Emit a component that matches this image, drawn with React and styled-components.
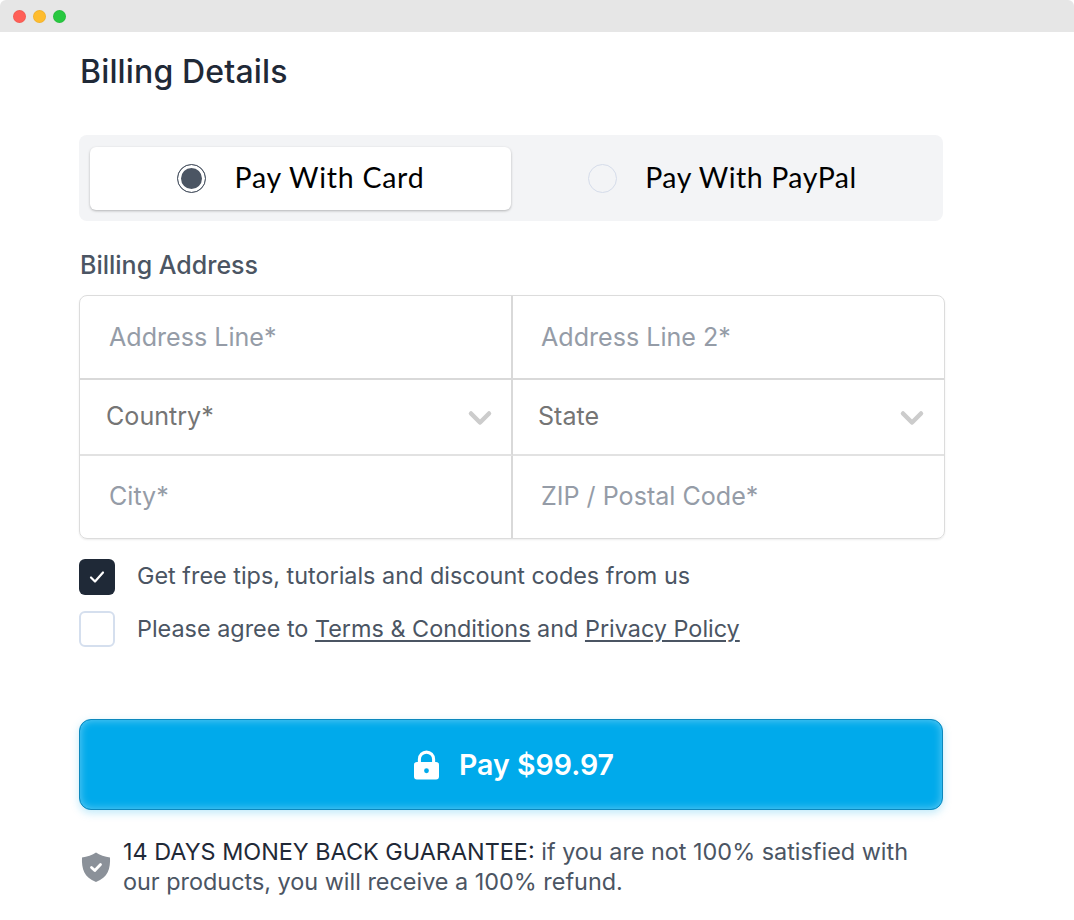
import React from "react";
import styled, { createGlobalStyle } from "styled-components";
import { ChevronDown } from "lucide-react";

const Global = createGlobalStyle`
  * { box-sizing: border-box; }
  html, body { margin: 0; padding: 0; background: #fff; }
  body { font-family: Inter, "Liberation Sans", sans-serif; }
`;

const Page = styled.div`
  width: 1074px;
  height: 920px;
  overflow: hidden;
  background: #fff;
`;

const TitleBar = styled.div`
  height: 32px;
  background: #e6e6e6;
  display: flex;
  align-items: center;
  gap: 7px;
  padding-left: 13px;
  border-radius: 6px 6px 0 0;
`;

const Dot = styled.span`
  width: 13px;
  height: 13px;
  border-radius: 50%;
  background: ${(p) => p.$color};
  border: 1px solid rgba(0, 0, 0, 0.05);
`;

const Content = styled.main`
  width: 866px;
  margin-left: 79px;
`;

const Title = styled.h1`
  margin: 0 0 0 1px;
  padding-top: 18px;
  font-size: 32px;
  letter-spacing: 0.15px;
  line-height: 44px;
  font-weight: 500;
  color: #1f2937;
`;

const Tabs = styled.div`
  margin: 41px 0 0;
  width: 864px;
  height: 86px;
  padding: 12px 11px;
  display: grid;
  grid-template-columns: 421px 1fr;
  background: #f3f4f6;
  border-radius: 8px;
`;

const Tab = styled.div`
  height: 63px;
  padding: 0 0 4px ${(p) => (p.$active ? "0" : "2px")};
  display: flex;
  align-items: center;
  justify-content: center;
  gap: ${(p) => (p.$active ? "29px" : "28px")};
  border-radius: 6px;
  font-family: Lato, sans-serif;
  font-size: 28.5px;
  letter-spacing: ${(p) => (p.$active ? "0.75px" : "0.55px")};
  color: #000;
  ${(p) =>
    p.$active &&
    `background: #fff;
     box-shadow: 0 1px 3px rgba(0,0,0,.2), 0 1px 2px rgba(0,0,0,.08);`}
`;

const Radio = styled.span`
  width: 29px;
  height: 29px;
  margin-top: 4px;
  border-radius: 50%;
  border: 1px solid ${(p) => (p.$on ? "#4b5563" : "#d5dcea")};
  background: ${(p) => (p.$on ? "#4b5563" : "transparent")};
  box-shadow: ${(p) => (p.$on ? "inset 0 0 0 3px #fff" : "none")};
`;

const SectionLabel = styled.div`
  margin: 27px 0 0 1px;
  font-size: 25px;
  line-height: 34px;
  font-weight: 500;
  color: #4b5563;
`;

const FormGrid = styled.div`
  margin-top: 13px;
  width: 866px;
  height: 244px;
  display: grid;
  grid-template-columns: 433px 1fr;
  grid-template-rows: 84px 76px 84px;
  border: 1px solid #dcdcdc;
  border-radius: 8px;
  box-shadow: 0 1px 2px rgba(0, 0, 0, 0.08);
  overflow: hidden;
`;

const Cell = styled.div`
  position: relative;
  min-width: 0;
  border-right: ${(p) => (p.$left ? "2px solid #d9d9d9" : "none")};
  border-bottom: ${(p) => (p.$last ? "none" : p.$top ? "2px solid #d9d9d9" : "2px solid #e2e2e2")};
`;

const Input = styled.input`
  width: 100%;
  height: 100%;
  border: 0;
  outline: 0;
  background: transparent;
  padding: 0 ${(p) => (p.$right ? "28px" : "29px")} ${(p) => (p.$low ? "4px" : "0")};
  font-family: Inter, sans-serif;
  font-size: 25.1px;
  color: #374151;
  &::placeholder {
    color: #959ca7;
    opacity: 1;
  }
`;

const Select = styled.select`
  width: 100%;
  height: 100%;
  border: 0;
  outline: 0;
  appearance: none;
  background: transparent;
  padding: 0 ${(p) => (p.$right ? "25px" : "26px")} 2px;
  font-family: Inter, sans-serif;
  font-size: 25.1px;
  color: #757575;
`;

const Chevron = styled(ChevronDown)`
  position: absolute;
  right: ${(p) => (p.$right ? "14px" : "13px")};
  top: 50%;
  margin-top: -17px;
  color: #cccccc;
  pointer-events: none;
`;

const Checks = styled.div`
  margin: 20px 0 0;
  display: flex;
  flex-direction: column;
  gap: 16px;
`;

const CheckRow = styled.label`
  display: flex;
  align-items: center;
  gap: 22px;
  font-size: 23.4px;
  line-height: 36px;
  color: #4b5563;
`;

const CheckText = styled.span`
  line-height: ${(p) => (p.$raise ? "34px" : "36px")};
  margin-bottom: ${(p) => (p.$raise ? "2px" : "0")};
`;

const Box = styled.span`
  width: 36px;
  height: 36px;
  flex: none;
  display: flex;
  align-items: center;
  justify-content: center;
  border-radius: 6px;
  background: ${(p) => (p.$checked ? "#1f2937" : "#fff")};
  border: ${(p) => (p.$checked ? "none" : "2px solid #d5dfee")};
`;

const Link = styled.a`
  color: #4b5563;
  text-decoration: underline;
  text-underline-offset: 3px;
`;

const PayButton = styled.button`
  margin: 72px 0 0;
  width: 864px;
  height: 91px;
  padding: 0 0 0 6px;
  display: flex;
  align-items: center;
  justify-content: center;
  gap: 20px;
  border: 1px solid #0d88bd;
  border-radius: 12px;
  background: #00aaeb;
  box-shadow: inset 0 0 9px rgba(255, 255, 255, 0.4), 0 3px 8px rgba(0, 170, 235, 0.25);
  color: #fff;
  font-family: Inter, sans-serif;
  font-size: 28.5px;
  font-weight: 600;
`;

const Guarantee = styled.div`
  margin: 27px 0 0 1px;
  width: 850px;
  display: flex;
  align-items: center;
  gap: 11px;
`;

const GuaranteeText = styled.p`
  margin: 0;
  font-size: 23.4px;
  line-height: 30px;
  color: #4b5563;
`;

const Strong = styled.span`
  color: #1f2937;
`;

export default function App() {
  return (
    <Page>
      <Global />
      <TitleBar>
        <Dot $color="#ff5f57" />
        <Dot $color="#febc2e" />
        <Dot $color="#28c840" />
      </TitleBar>
      <Content>
        <Title>Billing Details</Title>
        <Tabs>
          <Tab $active>
            <Radio $on />
            Pay With Card
          </Tab>
          <Tab>
            <Radio />
            Pay With PayPal
          </Tab>
        </Tabs>
        <SectionLabel>Billing Address</SectionLabel>
        <FormGrid>
          <Cell $left $top>
            <Input placeholder="Address Line*" />
          </Cell>
          <Cell $top>
            <Input $right placeholder="Address Line 2*" />
          </Cell>
          <Cell $left>
            <Select defaultValue="">
              <option value="">Country*</option>
            </Select>
            <Chevron size={36} strokeWidth={3} />
          </Cell>
          <Cell>
            <Select $right defaultValue="">
              <option value="">State</option>
            </Select>
            <Chevron $right size={36} strokeWidth={3} />
          </Cell>
          <Cell $left $last>
            <Input $low placeholder="City*" />
          </Cell>
          <Cell $last>
            <Input $low $right placeholder="ZIP / Postal Code*" />
          </Cell>
        </FormGrid>
        <Checks>
          <CheckRow>
            <Box $checked>
              <svg width="16" height="14" viewBox="0 0 16 14" fill="none">
                <path d="M2 7.5 6 11.5 14 2.5" stroke="#fff" strokeWidth="2.2" strokeLinecap="round" strokeLinejoin="round" />
              </svg>
            </Box>
            <CheckText $raise>Get free tips, tutorials and discount codes from us</CheckText>
          </CheckRow>
          <CheckRow>
            <Box />
            <CheckText>
              Please agree to <Link>Terms &amp; Conditions</Link> and <Link>Privacy Policy</Link>
            </CheckText>
          </CheckRow>
        </Checks>
        <PayButton>
          <svg width="25" height="30" viewBox="0 0 26 30">
            <path
              fill="#fff"
              fillRule="evenodd"
              d="M13 0a9 9 0 0 1 9 9v3h1a3 3 0 0 1 3 3v12a3 3 0 0 1-3 3H3a3 3 0 0 1-3-3V15a3 3 0 0 1 3-3h1V9a9 9 0 0 1 9-9Zm0 3.2A5.8 5.8 0 0 0 7.2 9v3h11.6V9A5.8 5.8 0 0 0 13 3.2ZM13 18.5a2.5 2.5 0 1 0 0 5 2.5 2.5 0 0 0 0-5Z"
            />
          </svg>
          Pay $99.97
        </PayButton>
        <Guarantee>
          <svg width="32" height="32" viewBox="0 0 32 32" style={{ flex: "none" }}>
            <path fill="#8b9199" d="M16 1.5c3.5 2.5 9 4.5 14 5 .5 11-2 20-14 24.5C4 26.5 1.5 17.5 2 6.5c5-.5 10.5-2.500 14-5Z" />
            <path d="M11.5 16.5 14.8 19.5 20.5 13.5" fill="none" stroke="#fff" strokeWidth="2.8" strokeLinecap="round" strokeLinejoin="round" />
          </svg>
          <GuaranteeText>
            <Strong>14 DAYS MONEY BACK GUARANTEE:</Strong> if you are not 100% satisfied with our products, you will receive a 100% refund.
          </GuaranteeText>
        </Guarantee>
      </Content>
    </Page>
  );
}
